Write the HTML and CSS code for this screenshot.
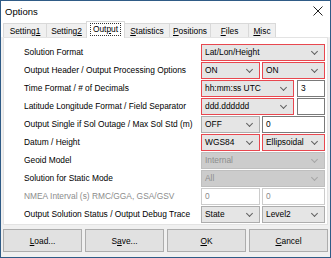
FILE: index.html
```html
<!DOCTYPE html>
<html lang="en">
<head>
  <meta charset="UTF-8" />
  <title>Options</title>
  <link rel="stylesheet" href="styles.css">
</head>
<body>
  <div class="window">
    <div class="titlebar">
      <span class="title">Options</span>
      <svg class="close" width="10" height="10" viewBox="0 0 10 10">
        <path d="M0.5 0.5 L9.5 9.5 M9.5 0.5 L0.5 9.5" stroke="#222" stroke-width="1" fill="none"/>
      </svg>
    </div>

    <div class="tabs">
      <div class="tab t1">Setting<u>1</u></div>
      <div class="tab t2">Setting<u>2</u></div>
      <div class="tab t3 active"><span class="focus">Out<u>p</u>ut</span></div>
      <div class="tab t4"><u>S</u>tatistics</div>
      <div class="tab t5"><u>P</u>ositions</div>
      <div class="tab t6"><u>F</u>iles</div>
      <div class="tab t7"><u>M</u>isc</div>
    </div>

    <div class="panel">
      <div class="row">
        <span class="label">Solution Format</span>
        <div class="ctrls">
          <div class="select red full">Lat/Lon/Height</div>
        </div>
      </div>
      <div class="row">
        <span class="label">Output Header / Output Processing Options</span>
        <div class="ctrls">
          <div class="select red half">ON</div>
          <div class="select red half2">ON</div>
        </div>
      </div>
      <div class="row">
        <span class="label">Time Format / # of Decimals</span>
        <div class="ctrls">
          <div class="select red wide">hh:mm:ss UTC</div>
          <div class="input small">3</div>
        </div>
      </div>
      <div class="row">
        <span class="label">Latitude Longitude Format / Field Separator</span>
        <div class="ctrls">
          <div class="select red wide">ddd.dddddd</div>
          <div class="input small"></div>
        </div>
      </div>
      <div class="row">
        <span class="label">Output Single if Sol Outage / Max Sol Std (m)</span>
        <div class="ctrls">
          <div class="select half">OFF</div>
          <div class="input half2">0</div>
        </div>
      </div>
      <div class="row">
        <span class="label">Datum / Height</span>
        <div class="ctrls">
          <div class="select red half">WGS84</div>
          <div class="select red half2">Ellipsoidal</div>
        </div>
      </div>
      <div class="row">
        <span class="label">Geoid Model</span>
        <div class="ctrls">
          <div class="select disabled full">Internal</div>
        </div>
      </div>
      <div class="row">
        <span class="label">Solution for Static Mode</span>
        <div class="ctrls">
          <div class="select disabled full">All</div>
        </div>
      </div>
      <div class="row">
        <span class="label muted">NMEA Interval (s) RMC/GGA, GSA/GSV</span>
        <div class="ctrls">
          <div class="input disabled half">0</div>
          <div class="input disabled half2">0</div>
        </div>
      </div>
      <div class="row">
        <span class="label">Output Solution Status / Output Debug Trace</span>
        <div class="ctrls">
          <div class="select half">State</div>
          <div class="select half2">Level2</div>
        </div>
      </div>
    </div>

    <div class="footer">
      <button class="btn"><u>L</u>oad...</button>
      <button class="btn">S<u>a</u>ve...</button>
      <button class="btn"><u>O</u>K</button>
      <button class="btn"><u>C</u>ancel</button>
    </div>
  </div>
</body>
</html>
```

FILE: styles.css
```css
body {
  margin: 0;
  padding: 0;
  font-family: 'Liberation Sans', Arial, sans-serif;
  font-size: 8.4px;
  color: #000;
  background: #fff;
}
.window {
  width: 329px;
  height: 256px;
  border: 1px solid #2f5b86;
  background: #f0f0f0;
  display: flex;
  flex-direction: column;
}
.titlebar {
  height: 20px;
  background: #fff;
  display: flex;
  align-items: center;
  justify-content: space-between;
  padding: 0 7px 0 4px;
}
.title {
  font-size: 9.5px;
}
.tabs {
  height: 16px;
  display: flex;
  align-items: flex-end;
  padding-left: 2px;
  background: #fff;
}
.tab {
  height: 14px;
  line-height: 14px;
  text-align: center;
  border: 1px solid #d9d9d9;
  border-bottom: none;
  margin-right: -1px;
  background: #f0f0f0;
  box-sizing: border-box;
}
.t1 { width: 44px; }
.t2 { width: 41px; }
.t3 { width: 39px; }
.t4 { width: 46px; }
.t5 { width: 42px; }
.t6 { width: 39px; }
.t7 { width: 28px; }
.tab.active {
  height: 17px;
  background: #fff;
  position: relative;
  z-index: 1;
  margin-bottom: -1px;
  padding-top: 1px;
  line-height: 13px;
}
.focus {
  display: inline-block;
  border: 1px dotted #333;
  padding: 0 2px;
  line-height: 11px;
}
.panel {
  background: #fff;
  border: 1px solid #e3e3e3;
  margin: 0 2px;
  padding: 5px 2px 0 20px;
  height: 188px;
  box-sizing: border-box;
}
.row {
  display: flex;
  align-items: center;
  height: 18px;
}
.label {
  flex: 1;
  white-space: nowrap;
}
.label.muted {
  color: #8c8c8c;
}
.ctrls {
  width: 124px;
  display: flex;
  justify-content: space-between;
}
.select, .input {
  height: 17px;
  line-height: 15px;
  box-sizing: border-box;
  padding-left: 3px;
  white-space: nowrap;
}
.select {
  background: #e5e5e5;
  border: 1px solid #adadad;
  position: relative;
}
.select::after {
  content: "";
  position: absolute;
  right: 7px;
  top: 4px;
  width: 4px;
  height: 4px;
  border-right: 1px solid #606060;
  border-bottom: 1px solid #606060;
  transform: rotate(45deg);
}
.select.red {
  border-color: #e8474f;
}
.select.disabled {
  background: #cccccc;
  border-color: #bfbfbf;
  color: #8c8c8c;
}
.select.disabled::after {
  border-color: #a6a6a6;
}
.input {
  background: #fff;
  border: 1px solid #7a7a7a;
}
.input.disabled {
  border-color: #cccccc;
  color: #8c8c8c;
}
.full { width: 124px; }
.half { width: 59px; }
.half2 { width: 63px; }
.wide { width: 93px; }
.small { width: 28px; }
.footer {
  flex: 1;
  display: flex;
  gap: 3px;
  padding: 4px 2px 2px;
}
.btn {
  flex: 1;
  height: 23px;
  font-family: inherit;
  font-size: 8.4px;
  background: #e1e1e1;
  border: 1px solid #adadad;
  padding: 0;
  color: #000;
}
```
